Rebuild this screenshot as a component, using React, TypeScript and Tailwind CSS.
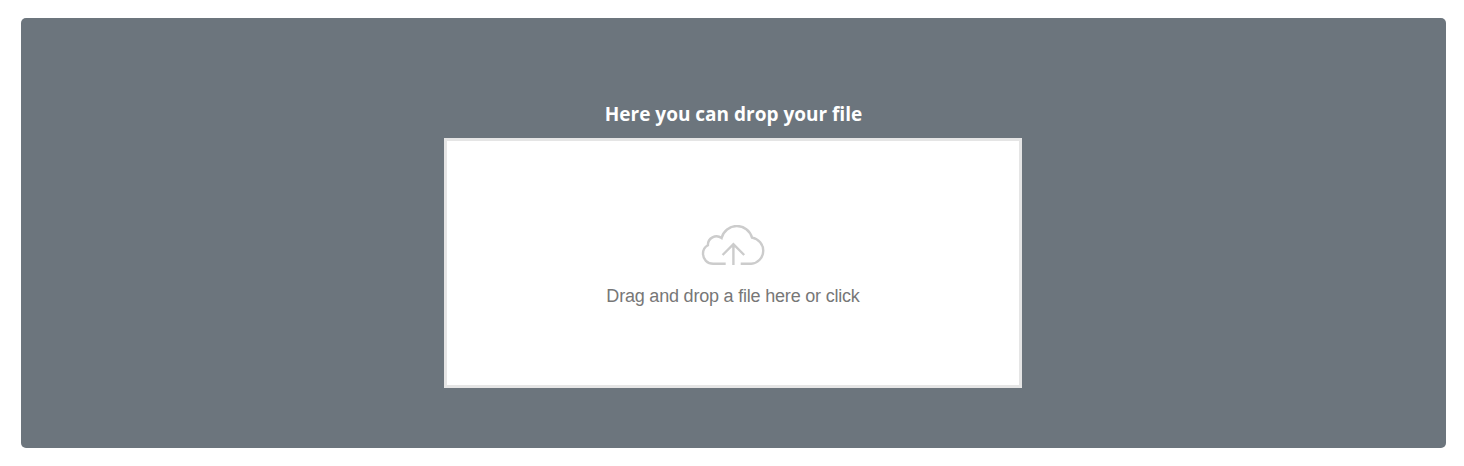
export default function App() {
  return (
    <main className="h-[466px] bg-white pt-[18px] pr-[18px] pl-[21px]">
      <section className="flex h-[430px] flex-col items-center rounded-[5px] bg-[#6c757d] pt-[84px] pr-px">
        <h2 className="h-9 whitespace-nowrap pl-px font-['Open_Sans',sans-serif] text-[19px] leading-6 font-bold text-white">
          Here you can drop your file
        </h2>
        <button className="flex h-[250px] w-[578px] flex-col items-center border-[3px] border-[#e5e5e5] bg-white pt-[84px]">
          <svg className="h-[40px] w-[64px]" viewBox="0 0 64 40" fill="none" stroke="#ccc" strokeWidth="2.4">
            <path d="M24.7 38.8H12.3C6.2 38.8 2 34.3 2 28.6C2 25 3.7 22 6.9 20.3A8.6 8.6 0 0 1 20.6 13A15.7 15.7 0 0 1 51 12.6A13.2 13.2 0 0 1 50.2 38.8H39.7M32.4 40V19.5M21.6 30L32.4 19.2L43.2 30" />
          </svg>
          <span className="mt-[19px] whitespace-nowrap font-['Liberation_Sans',sans-serif] text-[18px] leading-6 tracking-[-0.2px] text-[#777]">
            Drag and drop a file here or click
          </span>
        </button>
      </section>
    </main>
  );
}
